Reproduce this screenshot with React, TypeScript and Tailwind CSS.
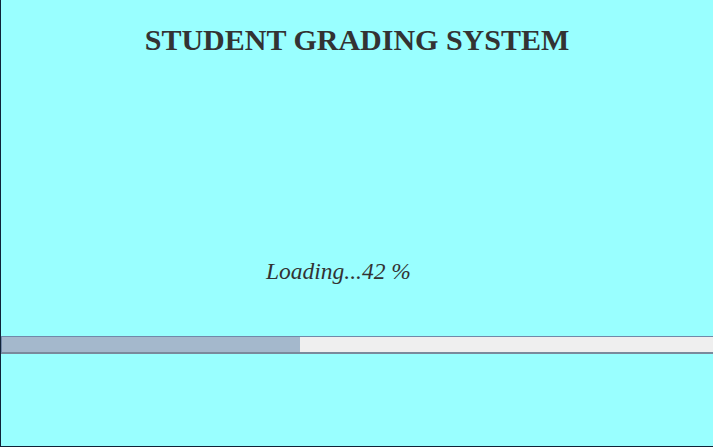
export default function App() {
  const pct = 42;
  return (
    <div className="w-[713px] h-[447px] bg-[#99ffff] border-l border-b border-[#0f2338] flex flex-col overflow-hidden">
      <h1 className="text-center mt-[23px] text-[30px] leading-[34px] font-bold text-[#333333] font-['Liberation_Serif',serif]">
        STUDENT GRADING SYSTEM
      </h1>
      <div className="mt-[200px] pl-[265px] text-[23.5px] leading-[28px] italic text-[#333333] font-['Liberation_Serif',serif]">
        Loading...{pct} %
      </div>
      <div className="mt-[51px] h-[18px] border-t border-l border-[#7189a9] border-b-2 border-b-[#7a8a9c] bg-[#efefef] flex">
        <div className="h-full bg-[#a4b8cc]" style={{ width: `${(298 / 711) * 100}%` }} />
      </div>
    </div>
  );
}
